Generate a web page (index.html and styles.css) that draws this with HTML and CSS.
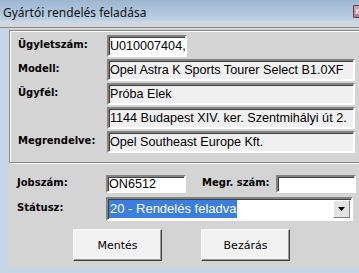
FILE: index.html
```html
<!DOCTYPE html>
<html lang="hu">
<head>
    <meta charset="UTF-8">
    <title>Gyártói rendelés feladása</title>
    <link rel="stylesheet" href="styles.css">
</head>
<body>
    <div class="window">
        <div class="titlebar">
            <span class="title">Gyártói rendelés feladása</span>
            <span class="close">x</span>
        </div>
        <div class="client">
            <div class="group">
                <div class="row">
                    <label>Ügyletszám:</label>
                    <div class="field white short">U010007404,</div>
                </div>
                <div class="row">
                    <label>Modell:</label>
                    <div class="field">Opel Astra K Sports Tourer Select B1.0XF</div>
                </div>
                <div class="row">
                    <label>Ügyfél:</label>
                    <div class="field">Próba Elek</div>
                </div>
                <div class="row">
                    <label></label>
                    <div class="field">1144 Budapest XIV. ker. Szentmihályi út 2.</div>
                </div>
                <div class="row">
                    <label>Megrendelve:</label>
                    <div class="field">Opel Southeast Europe Kft.</div>
                </div>
            </div>

            <div class="bottom">
                <div class="row">
                    <label>Jobszám:</label>
                    <div class="field white small">ON6512</div>
                    <label class="megr">Megr. szám:</label>
                    <div class="field white small narrow"></div>
                </div>
                <div class="row">
                    <label>Státusz:</label>
                    <div class="combo">
                        <span class="selected">20 - Rendelés feladva</span>
                        <span class="arrow">
                            <svg width="7" height="4" viewBox="0 0 7 4"><path d="M0 0h7L3.5 4z" fill="#000"/></svg>
                        </span>
                    </div>
                </div>
                <div class="buttons">
                    <button>Mentés</button>
                    <button>Bezárás</button>
                </div>
            </div>
        </div>
    </div>
</body>
</html>
```
FILE: styles.css
```css
* {
    margin: 0;
    padding: 0;
    box-sizing: border-box;
}

body {
    width: 359px;
    height: 273px;
    overflow: hidden;
    background: #c6d6e6;
    font-family: 'Liberation Sans', Arial, sans-serif;
}

.window {
    height: 273px;
    display: flex;
    flex-direction: column;
    overflow: hidden;
}

.titlebar {
    height: 28px;
    display: flex;
    justify-content: space-between;
    align-items: flex-start;
    background: linear-gradient(#9db6d0, #bcd0e4 70%, #d0d8e2 78%, #d4d6da 96%, #8a8a8a 96%);
    overflow: hidden;
}

.title {
    font-family: 'Noto Sans', sans-serif;
    font-size: 12px;
    color: #111;
    padding: 4px 0 0 3px;
}

.close {
    width: 6px;
    height: 13px;
    margin-top: 5px;
    background: linear-gradient(#d8a8b0, #b87884);
    border: 1px solid #6a3a44;
    border-right: none;
    border-radius: 2px 0 0 2px;
    font-size: 9px;
    color: #fff;
    padding-left: 1px;
    line-height: 11px;
    overflow: hidden;
}

.client {
    flex: 1;
    margin: 0 0 5px 8px;
    background: #d4d4d4;
    padding: 2px 0 0 1px;
    overflow: hidden;
}

.group {
    width: 370px;
    height: 133px;
    border: 1px solid #888;
    box-shadow: inset 1px 1px 0 #fff, 1px 1px 0 #fff;
    padding: 4px 0 0 8px;
    display: flex;
    flex-direction: column;
    gap: 2px;
}

.row {
    display: flex;
    align-items: center;
}

label {
    width: 89px;
    font-family: 'DejaVu Sans', sans-serif;
    font-weight: bold;
    font-size: 10px;
    color: #000;
    padding-bottom: 3px;
}

.field {
    width: 248px;
    height: 22px;
    background: #f0f0f0;
    border: 2px solid;
    border-color: #828282 #fff #fff #828282;
    box-shadow: inset 1px 1px 0 #404040;
    font-size: 12.6px;
    line-height: 18px;
    padding-left: 1px;
    color: #000;
    white-space: nowrap;
    overflow: hidden;
}

.field.white {
    background: #fff;
}

.field.short {
    width: 80px;
}

.bottom {
    padding: 11px 0 0 8px;
}

.bottom .field.small {
    width: 80px;
    height: 18px;
    line-height: 15px;
}

.bottom .row {
    height: 20px;
}

.bottom .row + .row {
    margin-top: 2px;
    height: 26px;
}

label.megr {
    width: auto;
    margin: 0 6px 0 16px;
}

.combo {
    width: 247px;
    height: 24px;
    background: #fff;
    border: 2px solid;
    border-color: #828282 #fff #fff #828282;
    box-shadow: inset 1px 1px 0 #404040;
    display: flex;
    align-items: center;
    justify-content: space-between;
    padding: 1px;
}

.selected {
    background: #3a7ee0;
    color: #fff;
    font-size: 13px;
    line-height: 18px;
    padding: 0 1px;
}

.arrow {
    width: 17px;
    height: 18px;
    background: #e4e4e4;
    border: 1px solid;
    border-color: #fff #808080 #808080 #fff;
    display: flex;
    align-items: center;
    justify-content: center;
}

.buttons {
    display: flex;
    gap: 39px;
    padding: 7px 0 0 56px;
}

button {
    width: 89px;
    height: 32px;
    background: #f2f2f2;
    border: 1px solid;
    border-color: #fff #404040 #404040 #fff;
    box-shadow: inset -1px -1px 0 #9a9a9a;
    font-family: 'DejaVu Sans', sans-serif;
    font-size: 11px;
    color: #000;
}
```
